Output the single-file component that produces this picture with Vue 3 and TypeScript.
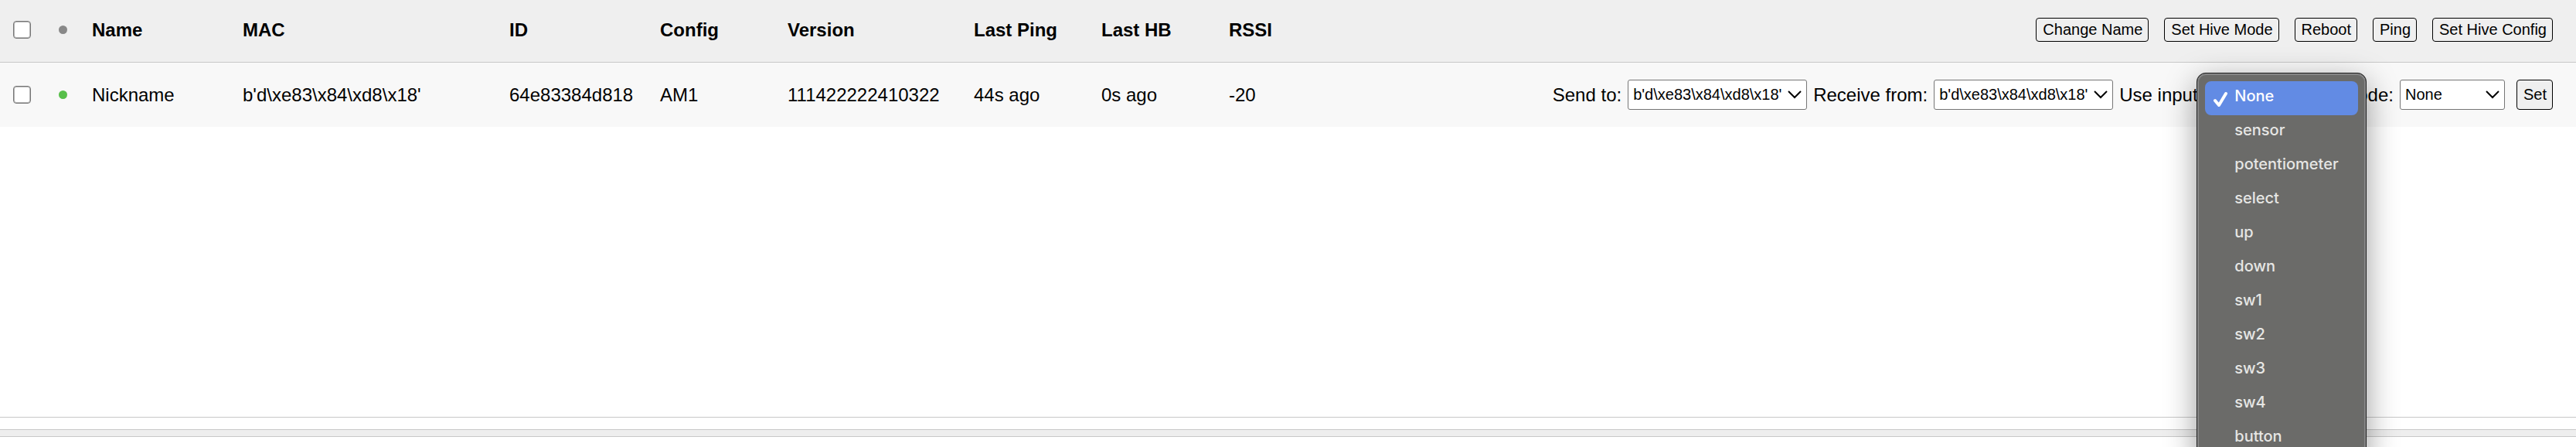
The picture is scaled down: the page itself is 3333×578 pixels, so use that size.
<script setup lang="ts">
import { ref } from 'vue'

interface Device {
  id: string
  name: string
  mac: string
  config: string
  version: string
  lastPing: string
  lastHb: string
  rssi: number
}

const headings = ['Name', 'MAC', 'ID', 'Config', 'Version', 'Last Ping', 'Last HB', 'RSSI']
const actions = ['Change Name', 'Set Hive Mode', 'Reboot', 'Ping', 'Set Hive Config']
const devices: Device[] = [
  {
    id: '64e83384d818',
    name: 'Nickname',
    mac: "b'd\\xe83\\x84\\xd8\\x18'",
    config: 'AM1',
    version: '111422222410322',
    lastPing: '44s ago',
    lastHb: '0s ago',
    rssi: -20,
  },
]
const inputs = ['None', 'sensor', 'potentiometer', 'select', 'up', 'down', 'sw1', 'sw2', 'sw3', 'sw4', 'button']
const chosen = ref('None')
const mode = ref('None')
</script>

<template>
  <main class="page">
    <section class="pane">
      <table class="devices">
        <colgroup>
          <col class="c-check" />
          <col class="c-dot" />
          <col class="c-name" />
          <col class="c-mac" />
          <col class="c-name" />
          <col class="c-small" />
          <col class="c-version" />
          <col class="c-small" />
          <col class="c-small" />
          <col class="c-small" />
          <col />
        </colgroup>
        <thead>
          <tr>
            <th class="check"><input type="checkbox" aria-label="Select all devices" /></th>
            <th><span class="dot"></span></th>
            <th v-for="h in headings" :key="h" scope="col">{{ h }}</th>
            <th>
              <div class="actions">
                <button v-for="a in actions" :key="a" type="button">{{ a }}</button>
              </div>
            </th>
          </tr>
        </thead>
        <tbody>
          <tr v-for="d in devices" :key="d.id">
            <td class="check"><input type="checkbox" :aria-label="'Select ' + d.name" /></td>
            <td><span class="dot online"></span></td>
            <td>{{ d.name }}</td>
            <td>{{ d.mac }}</td>
            <td>{{ d.id }}</td>
            <td>{{ d.config }}</td>
            <td>{{ d.version }}</td>
            <td>{{ d.lastPing }}</td>
            <td>{{ d.lastHb }}</td>
            <td>{{ d.rssi }}</td>
            <td>
              <form class="routing" @submit.prevent>
                <label for="send-to">Send to:</label>
                <span class="picker">
                  <select id="send-to" class="mac">
                    <option>{{ d.mac }}</option>
                  </select>
                  <svg class="chevron" viewBox="0 0 18 12"><path d="M1 2l8 8 8-8" /></svg>
                </span>
                <label for="receive-from">Receive from:</label>
                <span class="picker">
                  <select id="receive-from" class="mac">
                    <option>{{ d.mac }}</option>
                  </select>
                  <svg class="chevron" viewBox="0 0 18 12"><path d="M1 2l8 8 8-8" /></svg>
                </span>
                <label for="use-input">Use input:</label>
                <span class="picker">
                  <select id="use-input" v-model="chosen" class="input">
                    <option v-for="i in inputs" :key="i">{{ i }}</option>
                  </select>
                  <ul class="menu" role="listbox" aria-label="Use input">
                    <li
                      v-for="i in inputs"
                      :key="i"
                      role="option"
                      :aria-selected="i === chosen"
                      :class="{ chosen: i === chosen }"
                      @click="chosen = i"
                    >
                      <svg v-if="i === chosen" class="tick" viewBox="0 0 20 20">
                        <path d="M3 12l5 6L17 3" />
                      </svg>
                      {{ i }}
                    </li>
                  </ul>
                </span>
                <label for="mode">Mode:</label>
                <span class="picker">
                  <select id="mode" v-model="mode" class="mode">
                    <option>None</option>
                  </select>
                  <svg class="chevron" viewBox="0 0 18 12"><path d="M1 2l8 8 8-8" /></svg>
                </span>
                <button type="submit" class="set">Set</button>
              </form>
            </td>
          </tr>
        </tbody>
      </table>
    </section>
    <div class="splitter" role="separator"></div>
  </main>
</template>

<style>
body {
  background: #fff;
}
</style>

<style scoped>
.page {
  display: flex;
  flex-direction: column;
  box-sizing: border-box;
  height: 100vh;
  padding-bottom: 13px;
  overflow: hidden;
  font: 24px/28px "Liberation Sans", Arial, sans-serif;
  color: #000;
}
.pane {
  flex: 1;
  margin-bottom: 15px;
  border-bottom: 1px solid #c8c8c8;
}
.devices {
  width: 100%;
  table-layout: fixed;
  border-collapse: separate;
  border-spacing: 0;
}
.c-check { width: 60px; }
.c-dot { width: 59px; }
.c-name { width: 195px; }
.c-mac { width: 345px; }
.c-small { width: 165px; }
.c-version { width: 241px; }
th,
td {
  box-sizing: border-box;
  padding: 0;
  text-align: left;
  vertical-align: middle;
  white-space: nowrap;
}
th {
  height: 81px;
  padding-bottom: 3px;
  background: #efefef;
  border-bottom: 1px solid #c8c8c8;
}
td {
  height: 83px;
  background: #f8f8f8;
}
.check {
  padding-left: 17px;
}
input {
  display: block;
  appearance: none;
  box-sizing: border-box;
  width: 23px;
  height: 23px;
  margin: 0;
  border: 1px solid #767676;
  border-radius: 4px;
  background: #fff;
  box-shadow: inset 0 0 0 1px #b4b4b4;
}
input:checked {
  background: #628be4;
}
.dot {
  display: block;
  width: 11px;
  height: 11px;
  margin-left: 16px;
  border-radius: 50%;
  background: #888;
}
.dot.online {
  background: #57bf4a;
}
.actions,
.routing {
  display: flex;
  align-items: center;
  justify-content: flex-end;
  padding-right: 30px;
}
.actions {
  gap: 20px;
}
.routing {
  gap: 8px;
}
button,
select {
  box-sizing: border-box;
  margin: 0;
  font: 20px/23px "Liberation Sans", Arial, sans-serif;
  color: #000;
}
button {
  height: 31px;
  padding: 0 7px 0 8px;
  border: 1px solid #000;
  border-radius: 4px;
  background: #efefef;
}
.set {
  height: 39px;
  margin-left: 7px;
}
.picker {
  position: relative;
  display: block;
}
select {
  display: block;
  appearance: none;
  height: 39px;
  padding: 0 6px;
  border: 1px solid #767676;
  border-radius: 3px;
  background: #fff;
}
.mac { width: 232px; }
.input { width: 164px; }
.mode { width: 136px; }
.chevron {
  position: absolute;
  top: 13px;
  right: 7px;
  width: 18px;
  height: 12px;
  fill: none;
  stroke: #000;
  stroke-width: 2;
  pointer-events: none;
}
.menu {
  position: absolute;
  top: -9px;
  left: -16px;
  box-sizing: border-box;
  width: 220px;
  margin: 0;
  padding: 8px;
  list-style: none;
  border: 3px solid #868686;
  border-radius: 12px;
  outline: 1px solid #1c1c1c;
  outline-offset: -1px;
  background: #6b6b69;
  box-shadow: 0 12px 40px rgba(0, 0, 0, 0.4);
  font: 500 20px/38px Inter, sans-serif;
  color: #e6e6e4;
}
.menu li {
  position: relative;
  height: 44px;
  padding-left: 38px;
  box-sizing: border-box;
  border-radius: 8px;
}
.menu .chosen {
  background: #628be4;
  color: #fff;
}
.tick {
  position: absolute;
  top: 13px;
  left: 10px;
  width: 20px;
  height: 20px;
  fill: none;
  stroke: #fff;
  stroke-width: 4;
  stroke-linecap: round;
  stroke-linejoin: round;
}
.splitter {
  box-sizing: border-box;
  height: 10px;
  border: solid #c8c8c8;
  border-width: 1px 0;
  background: #eee;
}
</style>
